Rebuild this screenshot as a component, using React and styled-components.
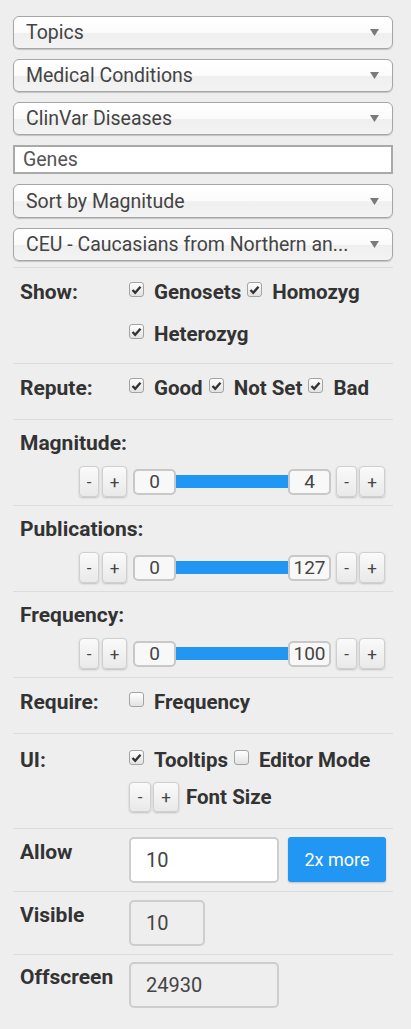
import React, { useState } from 'react'
import styled, { createGlobalStyle } from 'styled-components'

const GlobalStyle = createGlobalStyle`
  body {
    margin: 0;
    background: #eeeeee;
    font-family: Roboto, "Liberation Sans", sans-serif;
    color: #333;
  }
`

const Panel = styled.div`
  width: 380px;
  padding: 16px 18px 12px 13px;
`

const Dropdowns = styled.div`
  display: flex;
  flex-direction: column;
  gap: 10px;
  padding-bottom: 6px;
`

const SelectBox = styled.div`
  position: relative;
  height: ${(p) => p.$h || 33}px;
  box-sizing: border-box;
  border: 1px solid #a6a6a6;
  border-radius: 6px;
  background: linear-gradient(#ffffff 0%, #fbfbfb 50%, #efefef 52%, #f3f3f3 100%);
  box-shadow: 0 1px 1px rgba(0, 0, 0, 0.18);
  display: flex;
  align-items: center;
  padding: 0 12px;
  font-size: 19.5px;
  color: #444;
  white-space: nowrap;
`

const SelectText = styled.span`
  flex: 1;
  overflow: hidden;
`

const Arrow = styled.svg`
  width: 9px;
  height: 7px;
  margin-left: 10px;
  margin-right: 1px;
`

const TextInput = styled.div`
  height: 29px;
  box-sizing: border-box;
  border: 2px solid #a9a9a9;
  background: #fff;
  display: flex;
  align-items: center;
  padding: 0 8px;
  font-size: 19.5px;
  color: #555;
`

const Row = styled.div`
  display: grid;
  grid-template-columns: 109px 1fr;
  border-top: 1px solid #dcdcdc;
  padding: ${(p) => p.$pad || '3px 7px 10px'};
`

const Label = styled.div`
  font-size: 21px;
  font-weight: 700;
  color: #333;
  line-height: ${(p) => p.$lh || '42px'};
`

const Options = styled.div`
  display: flex;
  flex-wrap: wrap;
  align-items: center;
  column-gap: 6px;
  line-height: 42px;
`

const Option = styled.label`
  display: inline-flex;
  align-items: center;
  font-size: 20.5px;
  font-weight: 700;
  color: #333;
  white-space: nowrap;
  margin-left: ${(p) => p.$gap || 0}px;
`

const Box = styled.span`
  width: 15px;
  height: 15px;
  box-sizing: border-box;
  border: 1px solid #a3a3a3;
  border-radius: 3px;
  background: linear-gradient(#ffffff, #e2e2e2);
  margin: 0 10px 5px 0;
  display: inline-flex;
  align-items: center;
  justify-content: center;
`

const Checkbox = ({ checked, children }) => (
  <Option>
    <Box>
      {checked && (
        <svg width="11" height="10" viewBox="0 0 11 10">
          <path d="M1.5 5 L4.2 7.8 L9.5 1.8" fill="none" stroke="#333" strokeWidth="2.4" />
        </svg>
      )}
    </Box>
    {children}
  </Option>
)

const SliderSection = styled.div`
  border-top: 1px solid #dcdcdc;
  padding: 8px 8px 8px 7px;
`

const Controls = styled.div`
  display: flex;
  align-items: center;
  justify-content: flex-end;
  margin-top: 8px;
`

const StepButton = styled.button`
  width: ${(p) => p.$w || 24}px;
  height: ${(p) => p.$h || 31}px;
  margin-left: ${(p) => p.$gap || 0}px;
  padding: 0;
  box-sizing: border-box;
  border: 1px solid #cfcfcf;
  border-radius: 4px;
  background: linear-gradient(#fafafa, #e9e9e9);
  box-shadow: 0 1px 2px rgba(0, 0, 0, 0.2);
  font-family: Roboto, "Liberation Sans", sans-serif;
  font-size: 17px;
  color: #444;
`

const ValueBox = styled.div`
  width: 43px;
  height: 26px;
  box-sizing: border-box;
  border: 2px solid #c8c8c8;
  border-radius: 5px;
  background: #f8f8f8;
  display: flex;
  align-items: center;
  justify-content: center;
  font-size: 19px;
  color: #444;
  margin-left: ${(p) => p.$gap || 0}px;
`

const Track = styled.div`
  width: 112px;
  height: 13px;
  background: #2196f3;
`

const Slider = ({ max }) => (
  <Controls>
    <StepButton $w={20}>-</StepButton>
    <StepButton $w={25} $gap={3}>+</StepButton>
    <ValueBox $gap={6}>0</ValueBox>
    <Track />
    <ValueBox>{max}</ValueBox>
    <StepButton $w={21} $gap={5}>-</StepButton>
    <StepButton $w={26} $gap={2}>+</StepButton>
  </Controls>
)

const FontRow = styled.div`
  display: flex;
  align-items: center;
  height: 32px;
`

const FieldRow = styled.div`
  display: flex;
  align-items: flex-start;
  gap: 9px;
`

const Field = styled.div`
  width: ${(p) => p.$w}px;
  height: 46px;
  box-sizing: border-box;
  border: 2px solid #cdcdcd;
  border-radius: 5px;
  background: ${(p) => (p.$disabled ? '#eeeeee' : '#ffffff')};
  display: flex;
  align-items: center;
  padding-left: 15px;
  font-size: 20px;
  color: #444;
`

const MoreButton = styled.button`
  width: 98px;
  height: 45px;
  border: none;
  border-radius: 3px;
  background: #2196f3;
  box-shadow: 0 1px 2px rgba(0, 0, 0, 0.2);
  color: #fff;
  font-family: Roboto, "Liberation Sans", sans-serif;
  font-size: 18px;
`

const dropdowns = [
  'Topics',
  'Medical Conditions',
  'ClinVar Diseases',
]

const Select = ({ children, h }) => (
  <SelectBox $h={h}>
    <SelectText>{children}</SelectText>
    <Arrow viewBox="0 0 9 7">
      <polygon points="0,0 9,0 4.5,7" fill="#7a7a7a" />
    </Arrow>
  </SelectBox>
)

const App = () => {
  const [allow] = useState(10)

  return (
    <Panel>
      <GlobalStyle />
      <Dropdowns>
        {dropdowns.map((d) => (
          <Select key={d}>{d}</Select>
        ))}
        <TextInput>Genes</TextInput>
        <Select h={34}>Sort by Magnitude</Select>
        <Select>CEU - Caucasians from Northern an...</Select>
      </Dropdowns>

      <Row $pad="3px 7px 8px">
        <Label>Show:</Label>
        <Options>
          <Checkbox checked>Genosets</Checkbox>
          <Checkbox checked>Homozyg</Checkbox>
          <Checkbox checked>Heterozyg</Checkbox>
        </Options>
      </Row>

      <Row>
        <Label>Repute:</Label>
        <Options>
          <Checkbox checked>Good</Checkbox>
          <Checkbox checked>Not Set</Checkbox>
          <Checkbox checked>Bad</Checkbox>
        </Options>
      </Row>

      <SliderSection>
        <Label $lh="30px">Magnitude:</Label>
        <Slider max={4} />
      </SliderSection>

      <SliderSection>
        <Label $lh="30px">Publications:</Label>
        <Slider max={127} />
      </SliderSection>

      <SliderSection>
        <Label $lh="30px">Frequency:</Label>
        <Slider max={100} />
      </SliderSection>

      <Row>
        <Label>Require:</Label>
        <Options>
          <Checkbox>Frequency</Checkbox>
        </Options>
      </Row>

      <Row $pad="5px 7px 15px">
        <Label>UI:</Label>
        <div>
          <Options>
            <Checkbox checked>Tooltips</Checkbox>
            <Checkbox>Editor Mode</Checkbox>
          </Options>
          <FontRow>
            <StepButton $w={22} $h={30}>-</StepButton>
            <StepButton $w={26} $h={30} $gap={2}>+</StepButton>
            <Option $gap={7}>Font Size</Option>
          </FontRow>
        </div>
      </Row>

      <Row $pad="8px 7px 8px">
        <Label $lh="30px">Allow</Label>
        <FieldRow>
          <Field $w={150}>{allow}</Field>
          <MoreButton>2x more</MoreButton>
        </FieldRow>
      </Row>

      <Row $pad="8px 7px 8px">
        <Label $lh="30px">Visible</Label>
        <FieldRow>
          <Field $w={76} $disabled>10</Field>
        </FieldRow>
      </Row>

      <Row $pad="7px 7px 8px">
        <Label $lh="30px">Offscreen</Label>
        <FieldRow>
          <Field $w={150} $disabled>24930</Field>
        </FieldRow>
      </Row>
    </Panel>
  )
}

export default App
